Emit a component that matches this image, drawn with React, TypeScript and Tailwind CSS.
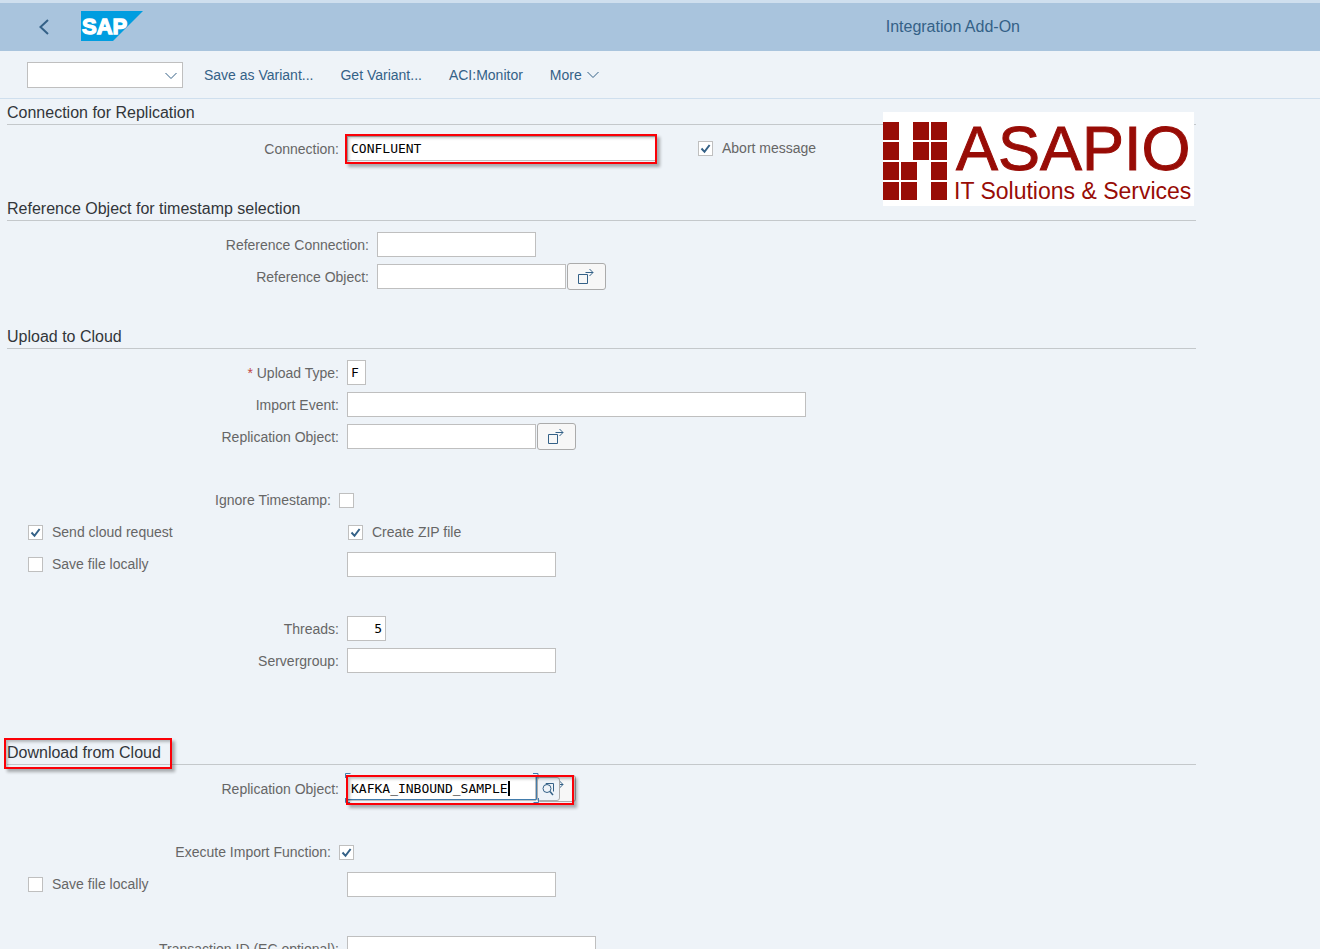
import { useId } from "react";
import type { ReactNode } from "react";

const LABEL = "text-right whitespace-nowrap shrink-0";

function Chevron() {
  return (
    <svg width="14" height="8" viewBox="0 0 14 8" fill="none" stroke="#346187" aria-hidden="true">
      <path d="M1.5 1 L7 6.5 L12.5 1" />
    </svg>
  );
}

function SapLogo() {
  return (
    <svg width="62" height="32" viewBox="0 0 62 32" role="img" aria-label="SAP">
      <path d="M0 0 H62 L32 30 H0 Z" fill="#009de0" />
      <text
        x="1"
        y="23"
        fill="#fff"
        stroke="#fff"
        strokeWidth="1.3"
        className="font-['Liberation_Sans',sans-serif] text-[22px] font-bold"
      >
        SAP
      </text>
    </svg>
  );
}

// squares of the company mark, as x, y pairs with a shared size
const SQUARES = [
  [0, 10], [30, 10], [48, 10],
  [0, 30], [30, 30], [48, 30],
  [0, 50], [18, 50], [48, 50],
  [0, 70], [18, 70], [48, 70],
];

function CompanyLogo() {
  return (
    <svg width="311" height="94" viewBox="0 0 311 94" role="img" aria-label="ASAPIO IT Solutions & Services">
      <rect width="311" height="94" fill="#fff" />
      <g fill="#980c06">
        {SQUARES.map(([x, y]) => (
          <rect key={`${x}-${y}`} x={x} y={y} width="16" height="18" />
        ))}
        <text x="73" y="58" stroke="#980c06" className="font-['Liberation_Sans',sans-serif] text-[63px]">
          ASAPIO
        </text>
        <text x="71" y="87" className="font-['Liberation_Sans',sans-serif] text-[23px]">
          IT Solutions &amp; Services
        </text>
      </g>
    </svg>
  );
}

// red frame drawn over the part that needs attention
function Highlight({ className }: { className: string }) {
  return (
    <span
      className={`absolute pointer-events-none border-2 border-[#fb0007] shadow-[3px_3px_3px_rgba(0,0,0,0.3),inset_2px_2px_3px_rgba(0,0,0,0.25)] ${className}`}
    />
  );
}

function Section({ title, marked, children }: { title: string; marked?: boolean; children: ReactNode }) {
  return (
    <section>
      <h2 className="relative h-6 border-b border-[#c4c8cb] text-base leading-6 text-[#32363a]">
        {title}
        {marked && <Highlight className="-left-[3px] -top-[3px] w-[168px] h-[31px]" />}
      </h2>
      <div className="pt-[11px] flex flex-col gap-[7px]">{children}</div>
    </section>
  );
}

function Row({ children }: { children?: ReactNode }) {
  return <div className="h-[25px] flex items-center">{children}</div>;
}

type FieldProps = {
  label?: string;
  name?: string;
  width: string;
  labelWidth?: string;
  value?: string;
  required?: boolean;
  alignRight?: boolean;
  children?: ReactNode;
};

function Field({ label, name, width, labelWidth = "w-[332px]", value, required, alignRight, children }: FieldProps) {
  const id = useId();
  return (
    <Row>
      <label htmlFor={id} className={`${LABEL} ${labelWidth} mr-2`}>
        {required && <span className="text-[#c14646]">* </span>}
        {label}
      </label>
      <span className="relative flex items-center gap-px">
        <input
          id={id}
          name={name}
          type="text"
          defaultValue={value}
          className={`h-[25px] border border-[#bfbfbf] bg-white px-[3px] font-['DejaVu_Sans_Mono',monospace] text-[13px] text-black ${width} ${alignRight ? "text-right" : ""}`}
        />
        {children}
      </span>
    </Row>
  );
}

function CheckMark({ id, checked }: { id: string; checked?: boolean }) {
  return (
    <span className="relative size-[15px] shrink-0">
      <input
        id={id}
        type="checkbox"
        defaultChecked={checked}
        className="peer block appearance-none size-[15px] border border-[#bfbfbf] bg-white"
      />
      <svg
        viewBox="0 0 15 15"
        fill="none"
        stroke="#346187"
        strokeWidth="2"
        className="absolute inset-0 size-[15px] pointer-events-none invisible peer-checked:visible"
      >
        <path d="M3.5 7.5 L6.5 10.8 L11.6 4" />
      </svg>
    </span>
  );
}

function Check({ label, checked }: { label: string; checked?: boolean }) {
  const id = useId();
  return (
    <span className="flex items-center gap-[9px]">
      <CheckMark id={id} checked={checked} />
      <label htmlFor={id} className="whitespace-nowrap pb-0.5">{label}</label>
    </span>
  );
}

// label on the left, tick box on the right
function TrailingCheck({ label, checked }: { label: string; checked?: boolean }) {
  const id = useId();
  return (
    <Row>
      <label htmlFor={id} className={`${LABEL} w-[324px] mr-2 pb-0.5`}>{label}</label>
      <CheckMark id={id} checked={checked} />
    </Row>
  );
}

function SaveLocally() {
  return (
    <Row>
      <div className="w-[340px] pl-[21px] shrink-0">
        <Check label="Save file locally" />
      </div>
      <input
        type="text"
        aria-label="File path"
        className="h-[25px] w-[209px] border border-[#bfbfbf] bg-white px-[3px] font-['DejaVu_Sans_Mono',monospace] text-[13px] text-black"
      />
    </Row>
  );
}

function SelectionButton() {
  return (
    <button
      type="button"
      aria-label="Multiple selection"
      className="w-[39px] h-[27px] shrink-0 rounded-[3px] border border-[#ababab] bg-[#f7f7f7] flex items-center justify-center"
    >
      <svg width="17" height="17" viewBox="0 0 17 17" fill="none" stroke="#346187" aria-hidden="true">
        <path d="M0.5 6.5 h9 v9 h-9 z M7.5 4.5 h7.5 M11.5 1 l3.5 3.5 l-3.5 3.5" />
      </svg>
    </button>
  );
}

function ValueHelpButton() {
  return (
    <button
      type="button"
      aria-label="Value help"
      className="absolute left-[190px] top-0.5 w-[23px] h-6 rounded-[3px] border border-[#ababab] bg-[#eef3f8] flex items-center justify-center"
    >
      <svg width="14" height="14" viewBox="0 0 14 14" fill="none" stroke="#346187" aria-hidden="true">
        <path d="M4 2.5 V1.5 H11.5 V9.5" />
        <circle cx="5" cy="6.5" r="4" />
        <path d="M8 9.5 L11 13" strokeWidth="1.5" />
      </svg>
    </button>
  );
}

// focus outline of the active input, with its four corner marks
function FocusFrame() {
  return (
    <svg
      width="194"
      height="31"
      viewBox="0 0 194 31"
      fill="none"
      stroke="#427cac"
      className="absolute -left-0.5 -top-0.5 pointer-events-none"
      aria-hidden="true"
    >
      <path d="M2.5 2.5 h189 v24 h-189 z" />
      <path d="M0.5 5 v-4.5 h5 M188 0.5 h5 v4.5 M193.5 25 v4.5 h-5 M5 29.5 h-4.5 v-4.5" />
    </svg>
  );
}

export default function App() {
  return (
    <div className="h-screen overflow-hidden bg-[#eef3f8] font-['Liberation_Sans',sans-serif] text-sm text-[#666]">
      <header className="h-[51px] border-t-[3px] border-[#cfdfee] bg-[#a9c4dd] flex items-center pl-[38px] pr-[300px]">
        <button type="button" aria-label="Back" className="mr-[30px]">
          <svg width="13" height="16" viewBox="0 0 13 16" fill="none" stroke="#346187" strokeWidth="2">
            <path d="M10 1 L2.5 8 L10 15" />
          </svg>
        </button>
        <SapLogo />
        <h1 className="ml-auto text-base text-[#346187]">Integration Add-On</h1>
      </header>

      <nav className="h-12 border-b border-[#cfdfee] flex items-center gap-[21px] pl-[27px] text-[#346187]">
        <div className="relative">
          <select
            aria-label="Command"
            className="block w-[156px] h-[26px] appearance-none border border-[#bfbfbf] bg-white px-1 text-black"
          >
            <option></option>
          </select>
          <span className="absolute right-[5px] top-[10px] pointer-events-none">
            <Chevron />
          </span>
        </div>
        <div className="flex items-center gap-[27px]">
          <button type="button">Save as Variant...</button>
          <button type="button">Get Variant...</button>
          <button type="button">ACI:Monitor</button>
          <button type="button" className="flex items-center gap-1">
            More
            <Chevron />
          </button>
        </div>
      </nav>

      <main className="relative pt-0.5 pl-[7px] pr-[124px]">
        <div className="absolute right-[126px] top-[13px] z-10">
          <CompanyLogo />
        </div>

        <div className="flex flex-col gap-9">
          <Section title="Connection for Replication">
            <div className="flex">
              <Field label="Connection:" name="connection" width="w-[309px]" value="CONFLUENT">
                <Highlight className="-left-0.5 -top-0.5 w-[312px] h-[30px]" />
              </Field>
              <div className="ml-[42px] flex items-center">
                <Check label="Abort message" checked />
              </div>
            </div>
          </Section>

          <Section title="Reference Object for timestamp selection">
            <Field label="Reference Connection:" labelWidth="w-[362px]" width="w-[159px]" />
            <Field label="Reference Object:" labelWidth="w-[362px]" width="w-[189px]">
              <SelectionButton />
            </Field>
          </Section>

          <Section title="Upload to Cloud">
            <Field label="Upload Type:" required width="w-[19px]" value="F" />
            <Field label="Import Event:" width="w-[459px]" />
            <Field label="Replication Object:" width="w-[189px]">
              <SelectionButton />
            </Field>
            <Row />
            <TrailingCheck label="Ignore Timestamp:" />
            <Row>
              <div className="w-[341px] pl-[21px]">
                <Check label="Send cloud request" checked />
              </div>
              <Check label="Create ZIP file" checked />
            </Row>
            <SaveLocally />
            <Row />
            <Field label="Threads:" width="w-[39px]" value="5" alignRight />
            <Field label="Servergroup:" width="w-[209px]" />
            <Row />
          </Section>

          <Section title="Download from Cloud" marked>
            <Field label="Replication Object:" width="w-[189px]" value="KAFKA_INBOUND_SAMPLE">
              <SelectionButton />
              <ValueHelpButton />
              <FocusFrame />
              <span className="absolute left-[161px] top-[6px] w-0.5 h-[15px] bg-black" />
              <Highlight className="-left-px top-0 w-[228px] h-[30px]" />
            </Field>
            <Row />
            <TrailingCheck label="Execute Import Function:" checked />
            <SaveLocally />
            <Row />
            <Field label="Transaction ID (EC optional):" width="w-[249px]" />
          </Section>
        </div>
      </main>
    </div>
  );
}
